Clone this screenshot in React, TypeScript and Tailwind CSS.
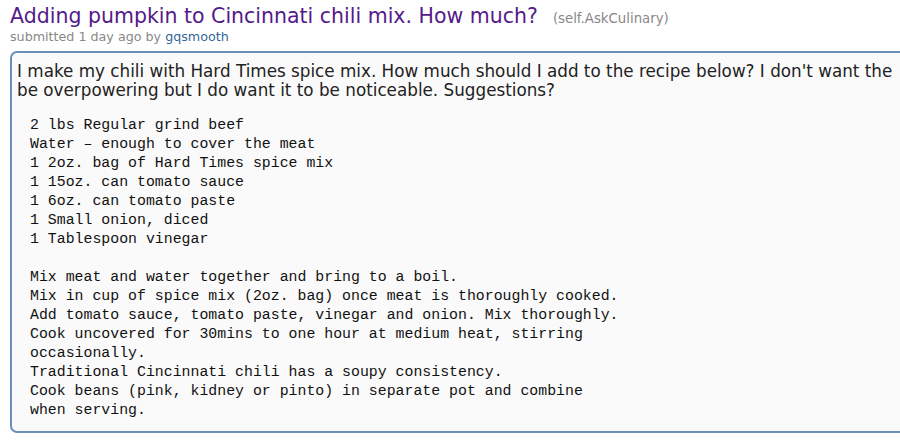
import React from "react";

const pre = `2 lbs Regular grind beef
Water – enough to cover the meat
1 2oz. bag of Hard Times spice mix
1 15oz. can tomato sauce
1 6oz. can tomato paste
1 Small onion, diced
1 Tablespoon vinegar

Mix meat and water together and bring to a boil.
Mix in cup of spice mix (2oz. bag) once meat is thoroughly cooked.
Add tomato sauce, tomato paste, vinegar and onion. Mix thoroughly.
Cook uncovered for 30mins to one hour at medium heat, stirring
occasionally.
Traditional Cincinnati chili has a soupy consistency.
Cook beans (pink, kidney or pinto) in separate pot and combine
when serving.`;

export default function App() {
  return (
    <div className="w-[900px] h-[440px] overflow-hidden bg-white" style={{ fontFamily: '"DejaVu Sans", Verdana, sans-serif' }}>
      <div className="pl-[10px] pt-[4px]">
        <div className="flex items-baseline whitespace-nowrap">
          <span className="text-[20.5px] leading-[24px] text-[#551a8b]">Adding pumpkin to Cincinnati chili mix. How much?</span>
          <span className="ml-[15px] text-[13.3px] text-[#888]">(self.AskCulinary)</span>
        </div>
        <div className="text-[12.7px] leading-[16px] text-[#888] whitespace-nowrap">
          submitted 1 day ago by <span className="text-[#369]">gqsmooth</span>
        </div>
        <div className="mt-[6px] w-[910px] h-[382px] border-2 border-[#6a8fb8] rounded-[7px] bg-[#fafafa] pl-[5px] pt-[9px]">
          <p className="text-[16.8px] leading-[19px] text-[#222] whitespace-nowrap">
            I make my chili with Hard Times spice mix. How much should I add to the recipe below? I don't want the
            <br />
            be overpowering but I do want it to be noticeable. Suggestions?
          </p>
          <pre className="mt-[16px] pl-[13px] text-[14.87px] leading-[19px] text-[#111]" style={{ fontFamily: '"Liberation Mono", monospace' }}>{pre}</pre>
        </div>
      </div>
    </div>
  );
}
